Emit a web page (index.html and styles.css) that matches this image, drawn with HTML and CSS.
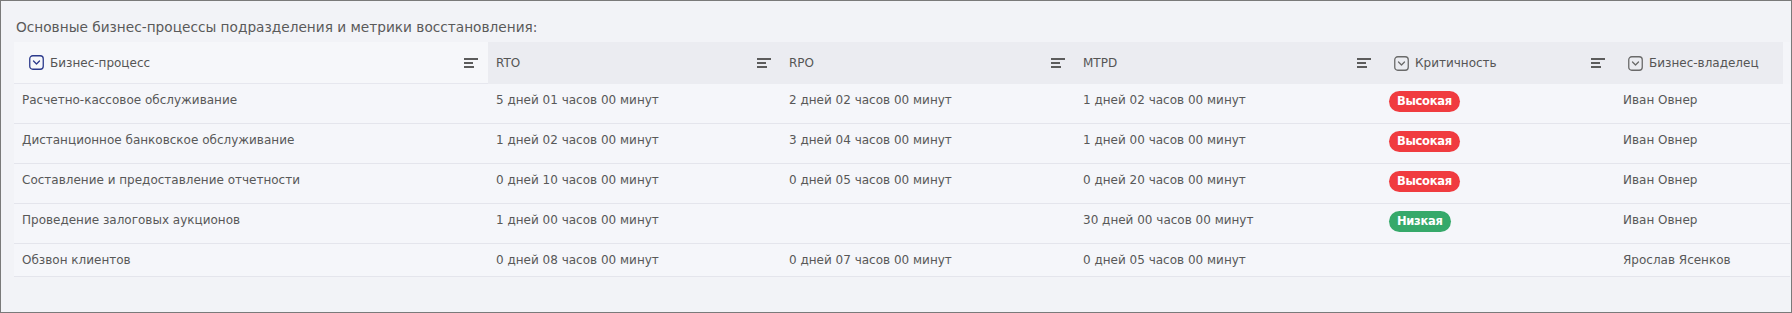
FILE: index.html
```html
<!DOCTYPE html>
<html lang="ru">
<head>
<meta charset="utf-8">
<title>Бизнес-процессы</title>
<link rel="stylesheet" href="styles.css">
</head>
<body>
<div class="frame">
  <div class="title">Основные бизнес-процессы подразделения и метрики восстановления:</div>
  <div class="table">
    <div class="thead">
      <div class="th th-first">
        <span class="th-label"><svg class="dd dd-blue" viewBox="0 0 15 15" width="15" height="15"><rect x="0.75" y="0.75" width="13.5" height="13.5" rx="3" ry="3"/><path d="M4.5 6 L7.5 9 L10.5 6"/></svg>Бизнес-процесс</span>
        <svg class="sort" viewBox="0 0 15 10" width="15" height="10"><rect x="0" y="0" width="14" height="2"/><rect x="0" y="4" width="9" height="2"/><rect x="0" y="8" width="10" height="2"/></svg>
      </div>
      <div class="th">
        <span class="th-label">RTO</span>
        <svg class="sort" viewBox="0 0 15 10" width="15" height="10"><rect x="0" y="0" width="14" height="2"/><rect x="0" y="4" width="9" height="2"/><rect x="0" y="8" width="10" height="2"/></svg>
      </div>
      <div class="th">
        <span class="th-label">RPO</span>
        <svg class="sort" viewBox="0 0 15 10" width="15" height="10"><rect x="0" y="0" width="14" height="2"/><rect x="0" y="4" width="9" height="2"/><rect x="0" y="8" width="10" height="2"/></svg>
      </div>
      <div class="th">
        <span class="th-label">MTPD</span>
        <svg class="sort" viewBox="0 0 15 10" width="15" height="10"><rect x="0" y="0" width="14" height="2"/><rect x="0" y="4" width="9" height="2"/><rect x="0" y="8" width="10" height="2"/></svg>
      </div>
      <div class="th th-dd">
        <span class="th-label"><svg class="dd" viewBox="0 0 15 15" width="15" height="15"><rect x="0.75" y="0.75" width="13.5" height="13.5" rx="3" ry="3"/><path d="M4.5 6 L7.5 9 L10.5 6"/></svg>Критичность</span>
        <svg class="sort" viewBox="0 0 15 10" width="15" height="10"><rect x="0" y="0" width="14" height="2"/><rect x="0" y="4" width="9" height="2"/><rect x="0" y="8" width="10" height="2"/></svg>
      </div>
      <div class="th th-dd">
        <span class="th-label"><svg class="dd" viewBox="0 0 15 15" width="15" height="15"><rect x="0.75" y="0.75" width="13.5" height="13.5" rx="3" ry="3"/><path d="M4.5 6 L7.5 9 L10.5 6"/></svg>Бизнес-владелец</span>
      </div>
      <div class="th-spacer"></div>
    </div>

    <div class="row">
      <div class="td">Расчетно-кассовое обслуживание</div>
      <div class="td">5 дней 01 часов 00 минут</div>
      <div class="td">2 дней 02 часов 00 минут</div>
      <div class="td">1 дней 02 часов 00 минут</div>
      <div class="td"><span class="badge badge-high">Высокая</span></div>
      <div class="td">Иван Овнер</div>
    </div>
    <div class="row">
      <div class="td">Дистанционное банковское обслуживание</div>
      <div class="td">1 дней 02 часов 00 минут</div>
      <div class="td">3 дней 04 часов 00 минут</div>
      <div class="td">1 дней 00 часов 00 минут</div>
      <div class="td"><span class="badge badge-high">Высокая</span></div>
      <div class="td">Иван Овнер</div>
    </div>
    <div class="row">
      <div class="td">Составление и предоставление отчетности</div>
      <div class="td">0 дней 10 часов 00 минут</div>
      <div class="td">0 дней 05 часов 00 минут</div>
      <div class="td">0 дней 20 часов 00 минут</div>
      <div class="td"><span class="badge badge-high">Высокая</span></div>
      <div class="td">Иван Овнер</div>
    </div>
    <div class="row">
      <div class="td">Проведение залоговых аукционов</div>
      <div class="td">1 дней 00 часов 00 минут</div>
      <div class="td"></div>
      <div class="td">30 дней 00 часов 00 минут</div>
      <div class="td"><span class="badge badge-low">Низкая</span></div>
      <div class="td">Иван Овнер</div>
    </div>
    <div class="row row-last">
      <div class="td">Обзвон клиентов</div>
      <div class="td">0 дней 08 часов 00 минут</div>
      <div class="td">0 дней 07 часов 00 минут</div>
      <div class="td">0 дней 05 часов 00 минут</div>
      <div class="td"></div>
      <div class="td">Ярослав Ясенков</div>
    </div>
  </div>
</div>
</body>
</html>
```

FILE: styles.css
```css
html, body {
  margin: 0;
  padding: 0;
  background: #f2f3f7;
}

.frame {
  box-sizing: border-box;
  width: 1792px;
  height: 313px;
  border: 1px solid #7a7a7a;
  background: #f2f3f7;
  padding: 16px 1px 0 13px;
  font-family: "DejaVu Sans", Verdana, sans-serif;
  color: #585858;
}

.title {
  font-size: 13.7px;
  line-height: 20px;
  height: 20px;
  padding-left: 2px;
  margin-bottom: 5px;
  color: #5a5a5a;
}

.table {
  font-size: 12px;
}

.thead {
  display: grid;
  grid-template-columns: 474px 293px 294px 306px 234px 1fr 7px;
  height: 42px;
  background: #ebecf1;
}

.th {
  display: flex;
  align-items: center;
  justify-content: space-between;
  padding: 0 9px 0 8px;
  color: #555;
}

.th-first {
  background: #f6f7fa;
  border-bottom: 1px solid #e6e7ee;
  padding-left: 15px;
}

.th-dd {
  padding-left: 13px;
}

.th-spacer {
  background: #f4f5f9;
}

.th-label {
  display: flex;
  align-items: center;
  gap: 6px;
  white-space: nowrap;
}

.dd {
  flex: none;
  fill: none;
  stroke: #6a6a6a;
  stroke-width: 1.3;
  stroke-linecap: round;
  stroke-linejoin: round;
}

.dd-blue {
  stroke: #2c3a8c;
}

.sort {
  flex: none;
  fill: #5c5c5c;
}

.row {
  display: grid;
  grid-template-columns: 474px 293px 294px 306px 234px 1fr;
  box-sizing: border-box;
  height: 40px;
  background: #f5f6fa;
  border-bottom: 1px solid #e4e5ec;
}

.row-last {
  height: 33px;
}

.td {
  padding: 7px 8px 0 8px;
  line-height: 19px;
  white-space: nowrap;
  color: #585858;
}

.badge {
  display: inline-block;
  height: 21px;
  line-height: 21px;
  padding: 0 8px;
  border-radius: 11px;
  color: #fff;
  font-weight: bold;
  font-size: 11.5px;
  letter-spacing: -0.3px;
  vertical-align: top;
}

.badge-high {
  background: #f03b3f;
}

.badge-low {
  background: #36a96a;
}
```
